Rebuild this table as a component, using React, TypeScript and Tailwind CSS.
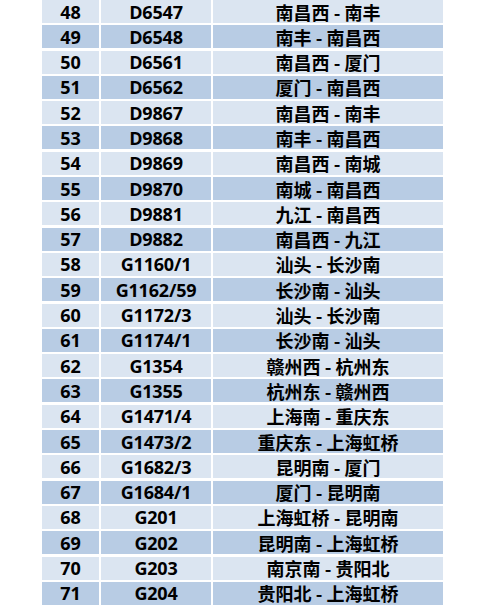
const rows: [number, string, string][] = [
  [48, "D6547", "南昌西 - 南丰"],
  [49, "D6548", "南丰 - 南昌西"],
  [50, "D6561", "南昌西 - 厦门"],
  [51, "D6562", "厦门 - 南昌西"],
  [52, "D9867", "南昌西 - 南丰"],
  [53, "D9868", "南丰 - 南昌西"],
  [54, "D9869", "南昌西 - 南城"],
  [55, "D9870", "南城 - 南昌西"],
  [56, "D9881", "九江 - 南昌西"],
  [57, "D9882", "南昌西 - 九江"],
  [58, "G1160/1", "汕头 - 长沙南"],
  [59, "G1162/59", "长沙南 - 汕头"],
  [60, "G1172/3", "汕头 - 长沙南"],
  [61, "G1174/1", "长沙南 - 汕头"],
  [62, "G1354", "赣州西 - 杭州东"],
  [63, "G1355", "杭州东 - 赣州西"],
  [64, "G1471/4", "上海南 - 重庆东"],
  [65, "G1473/2", "重庆东 - 上海虹桥"],
  [66, "G1682/3", "昆明南 - 厦门"],
  [67, "G1684/1", "厦门 - 昆明南"],
  [68, "G201", "上海虹桥 - 昆明南"],
  [69, "G202", "昆明南 - 上海虹桥"],
  [70, "G203", "南京南 - 贵阳北"],
  [71, "G204", "贵阳北 - 上海虹桥"],
]

export default function App() {
  return (
    <div className="w-[500px] h-[606px] bg-white overflow-hidden">
      <div className="ml-[42px] w-[401px] flex flex-col gap-y-[2.3px]">
        {rows.map(([no, train, route], i) => {
          const bg = i % 2 === 0 ? "bg-[#dbe5f1]" : "bg-[#b8cce4]"
          return (
            <div key={no} className="grid grid-cols-[57px_110px_230px] gap-x-[2px] h-[23px] text-black">
              <div
                className={`${bg} flex items-center justify-center font-bold text-[18px] leading-none`}
                style={{ fontFamily: '"Open Sans", "Noto Sans", sans-serif' }}
              >
                {no}
              </div>
              <div
                className={`${bg} flex items-center justify-center font-bold text-[18px] leading-none tracking-[-0.2px]`}
                style={{ fontFamily: '"Open Sans", "Noto Sans", sans-serif' }}
              >
                {train}
              </div>
              <div
                className={`${bg} flex items-center justify-center font-bold text-[18px] leading-none whitespace-pre`}
                style={{ fontFamily: '"Noto Sans CJK SC", sans-serif' }}
              >
                {route}
              </div>
            </div>
          )
        })}
      </div>
    </div>
  )
}
